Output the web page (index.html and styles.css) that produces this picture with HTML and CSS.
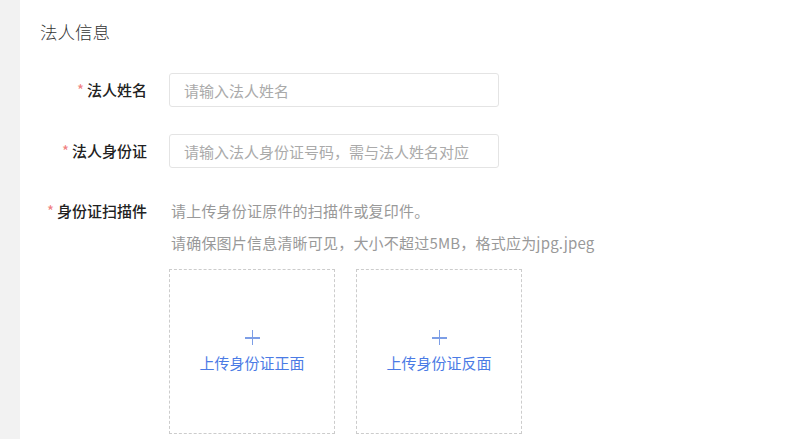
FILE: index.html
```html
<!DOCTYPE html>
<html lang="zh-CN">
<head>
  <meta charset="UTF-8" />
  <title>法人信息</title>
  <link rel="stylesheet" href="styles.css">
</head>
<body>
  <div class="page">
    <div class="side"></div>
    <div class="panel">
      <h3 class="section-title">法人信息</h3>

      <div class="form-row">
        <label class="form-label" for="name"><span class="req">*</span>法人姓名</label>
        <input class="form-input" type="text" id="name" placeholder="请输入法人姓名" />
      </div>

      <div class="form-row">
        <label class="form-label" for="idno"><span class="req">*</span>法人身份证</label>
        <input class="form-input" type="text" id="idno" placeholder="请输入法人身份证号码，需与法人姓名对应" />
      </div>

      <div class="form-row form-row-top">
        <label class="form-label"><span class="req">*</span>身份证扫描件</label>
        <div class="upload-area">
          <p class="hint">请上传身份证原件的扫描件或复印件。</p>
          <p class="hint">请确保图片信息清晰可见，大小不超过5MB，格式应为jpg.jpeg</p>
          <div class="upload-list">
            <div class="upload-box">
              <span class="plus"></span>
              <span class="upload-text">上传身份证正面</span>
            </div>
            <div class="upload-box">
              <span class="plus"></span>
              <span class="upload-text">上传身份证反面</span>
            </div>
          </div>
        </div>
      </div>
    </div>
  </div>
</body>
</html>
```

FILE: styles.css
```css
* {
  box-sizing: border-box;
  margin: 0;
  padding: 0;
  font-family: "Noto Sans CJK SC", "Noto Sans", sans-serif;
}
body {
  background: #fff;
  overflow: hidden;
}
.page {
  display: flex;
  height: 439px;
}
.side {
  width: 20px;
  background: #f2f2f2;
}
.panel {
  flex: 1;
  background: #fff;
  padding-top: 20px;
}
.section-title {
  font-size: 17.5px;
  font-weight: 300;
  line-height: 24px;
  color: #333;
  padding-left: 20px;
  margin-bottom: 29px;
}
.form-row {
  display: flex;
  align-items: center;
  margin-bottom: 27px;
}
.form-row-top {
  align-items: flex-start;
  margin-top: 5px;
  margin-bottom: 0;
}
.form-label {
  width: 127px;
  margin-right: 22px;
  text-align: right;
  font-size: 15px;
  font-weight: 500;
  color: #222;
  line-height: 32px;
  flex-shrink: 0;
}
.req {
  color: #f08080;
  font-weight: normal;
  margin-right: 3px;
}
.form-input {
  width: 330px;
  height: 34px;
  padding: 0 14px;
  border: 1px solid #e4e4e4;
  border-radius: 3px;
  font-size: 15px;
  color: #333;
  outline: none;
}
.form-input::placeholder {
  color: #aaa;
}
.hint {
  font-size: 15px;
  color: #999;
  line-height: 32px;
  padding-left: 2px;
  letter-spacing: 0.2px;
}
.upload-list {
  display: flex;
  gap: 21px;
  margin-top: 10px;
}
.upload-box {
  width: 166px;
  height: 165px;
  border: 1px dashed #ccc;
  display: flex;
  flex-direction: column;
  align-items: center;
  justify-content: center;
}
.plus {
  position: relative;
  width: 15px;
  height: 15px;
  margin-bottom: 8px;
}
.plus::before,
.plus::after {
  content: "";
  position: absolute;
  background: #7d9ee6;
}
.plus::before {
  left: 0;
  right: 0;
  top: 7px;
  height: 1.5px;
}
.plus::after {
  top: 0;
  bottom: 0;
  left: 7px;
  width: 1.5px;
}
.upload-text {
  font-size: 15px;
  color: #4b7be5;
  line-height: 20px;
}
```
